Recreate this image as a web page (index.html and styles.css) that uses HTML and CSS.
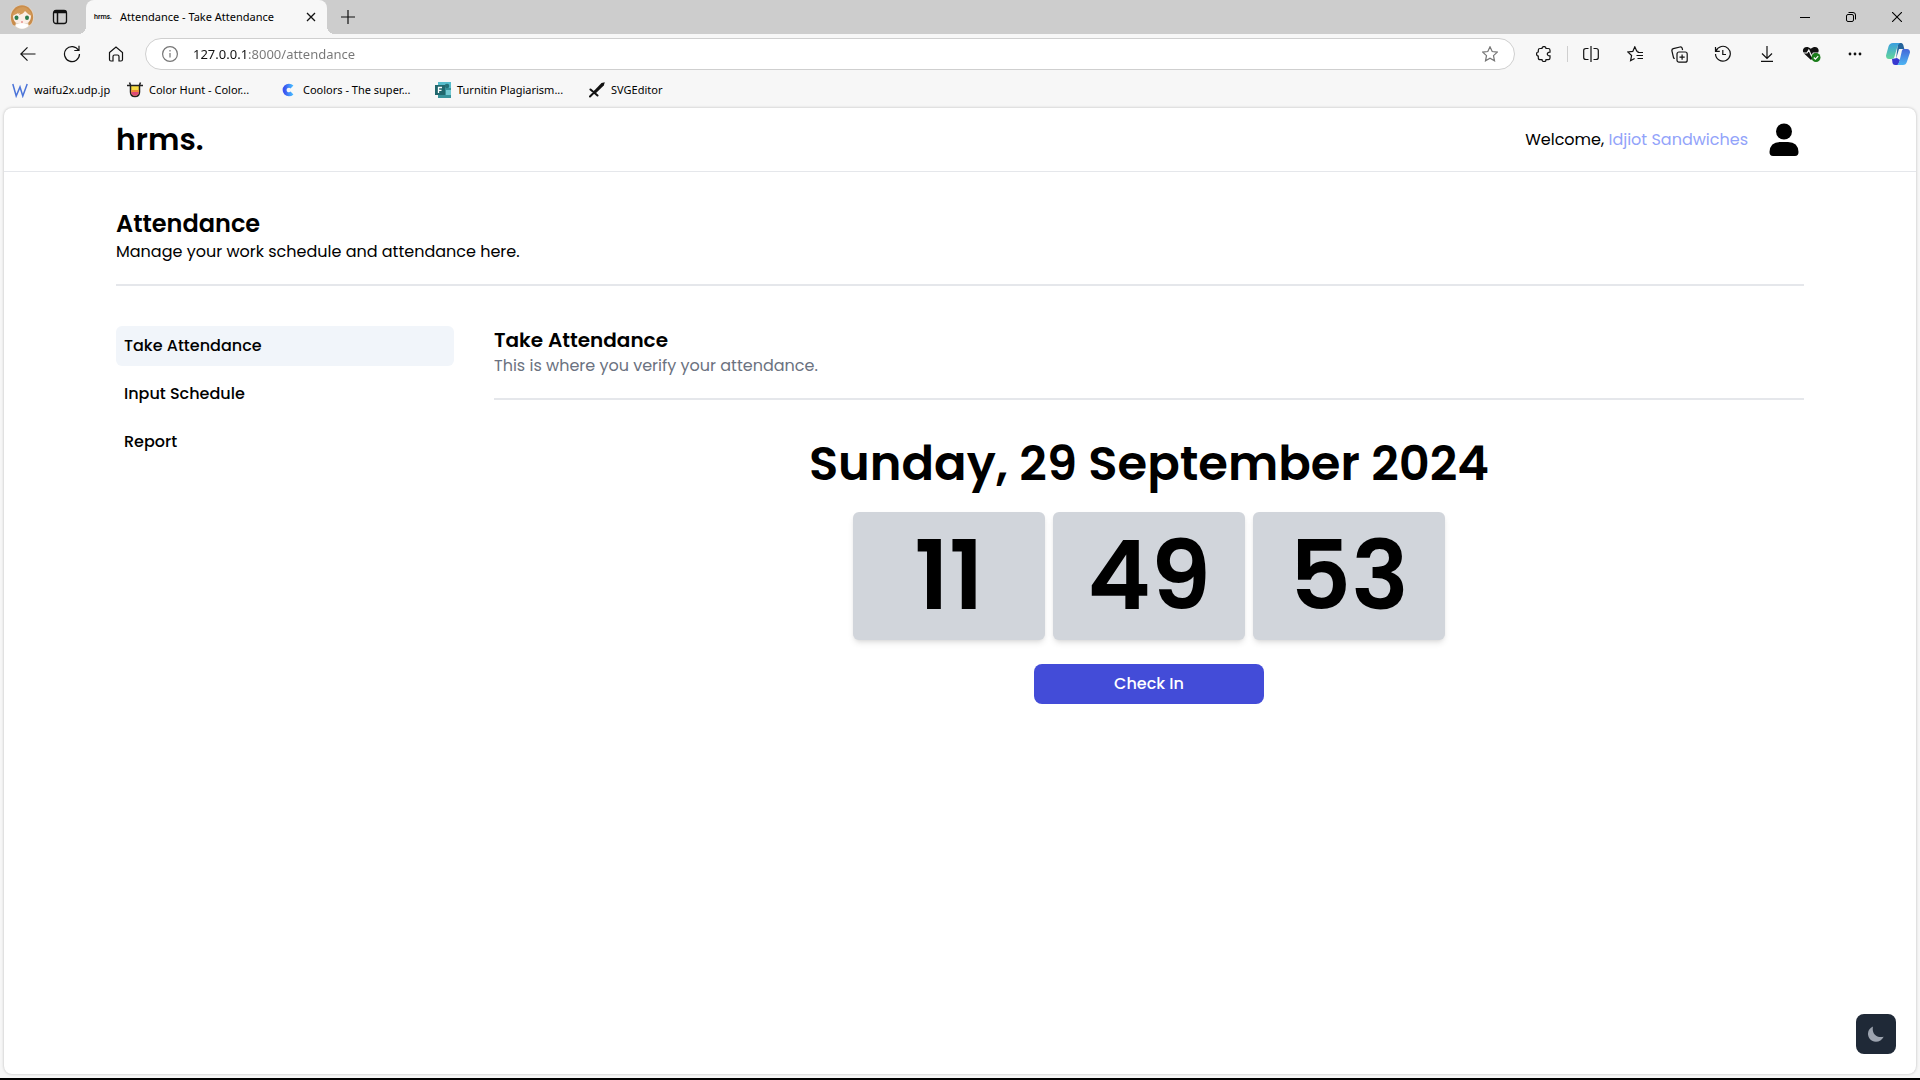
FILE: index.html
```html
<!DOCTYPE html>
<html lang="en">
<head>
<meta charset="utf-8">
<meta name="viewport" content="width=device-width, initial-scale=1">
<title>Attendance - Take Attendance</title>
<link rel="stylesheet" href="styles.css">
</head>
<body>
<div class="tabstrip">
  <button class="profile" aria-label="Profile">
    <svg width="24" height="24" viewBox="0 0 24 24"><circle cx="12" cy="12" r="12" fill="#e3d5c5"/><path d="M3 20C0 15 0 8 4 4 8-1 16-1 20 4c4 4 4 11 1 15l-3 2 1-8-14 0 1 8z" fill="#c98d4c"/><path d="M3 11c1-3 4-4 6-6l-1 4 6-4c4 1 7 3 7 6 0 6-4 8-9 8s-9-2-9-8z" fill="#fbeee6"/><path d="M2 11C4 5 9 2 13 2c4 0 8 4 9 9-3-1-5-3-7-5-1 2-3 3-6 4l1-3c-2 1-5 3-8 4z" fill="#d39a58"/><ellipse cx="6.500" cy="12.800" rx="2" ry="2.200" fill="#2f7d4f"/><ellipse cx="17" cy="12.800" rx="2" ry="2.200" fill="#2f7d4f"/><path d="M5 20c3-2 11-2 14 0-3 5-11 5-14 0z" fill="#fff"/><path d="M11 17h2" stroke="#d66"/></svg>
  </button>
  <button class="tab-actions" aria-label="Tab actions">
    <svg width="16" height="16" viewBox="0 0 16 16" fill="none" stroke="#111"><rect x="1.500" y="1.500" width="13" height="13" rx="2.500" stroke-width="1.300"/><path d="M2 3.500h12M5.500 4v10" stroke-width="1.500"/><path d="M2 2.500h12" stroke-width="2"/></svg>
  </button>
  <div class="tab">
    <span class="favicon">hrms.</span>
    <span class="tab-title">Attendance - Take Attendance</span>
    <button class="tab-close" aria-label="Close tab"><svg width="10" height="10" viewBox="0 0 10 10" stroke="#111" stroke-width="1.300"><path d="M1 1l8 8M9 1l-8 8"/></svg></button>
  </div>
  <button class="new-tab" aria-label="New tab"><svg width="14" height="14" viewBox="0 0 14 14" stroke="#111" stroke-width="1.200"><path d="M7 0v14M0 7h14"/></svg></button>
  <div class="window-controls">
    <button aria-label="Minimize"><svg width="10" height="10" viewBox="0 0 10 10" stroke="#000"><path d="M0 5.500h10"/></svg></button>
    <button aria-label="Restore"><svg width="10" height="10" viewBox="0 0 10 10" fill="none" stroke="#000"><rect x=".5" y="2.500" width="7" height="7" rx="1.500"/><path d="M2.500.5h4.500a2.500 2.500 0 0 1 2.500 2.500v4.500"/></svg></button>
    <button aria-label="Close"><svg width="10" height="10" viewBox="0 0 10 10" stroke="#000" stroke-width="1.100"><path d="M0 0l10 10M10 0L0 10"/></svg></button>
  </div>
</div>

<div class="toolbar">
  <button class="tool" aria-label="Back"><svg width="16" height="16" viewBox="0 0 16 16"><path d="M15.500 8H.8M7.500 1.300L.8 8l6.700 6.700"/></svg></button>
  <button class="tool" aria-label="Refresh"><svg width="18" height="18" viewBox="0 0 18 18"><path d="M15.500 5.300A7.500 7.500 0 1 0 16.500 9M16 .8v4.700h-4.700"/></svg></button>
  <button class="tool" aria-label="Home"><svg width="16" height="16" viewBox="0 0 16 16"><path d="M1.500 6.500L8 1l6.500 5.500v7q0 1.500-1.500 1.500h-2V10.500q0-1.500-1.500-1.500h-3Q5 9 5 10.500V15H3q-1.500 0-1.500-1.500z"/></svg></button>
  <div class="address">
    <svg class="info" width="16" height="16" viewBox="0 0 16 16"><circle cx="8" cy="8" r="7.400"/><path d="M8 7v4.500M8 4v1.500"/></svg>
    <input class="url" type="text" aria-label="Address" value="127.0.0.1:8000/attendance">
    <button class="favorite" aria-label="Add to favorites"><svg width="16" height="16" viewBox="0 0 16 16"><path d="M8 .8l2.200 4.700 5.100.6-3.800 3.500 1 5.200L8 12.200l-4.500 2.600 1-5.200L.7 6.100l5.100-.6z"/></svg></button>
  </div>
  <button class="tool" aria-label="Extensions"><svg width="16" height="16" viewBox="0 0 16 16"><path d="M4 2.500H6c0-2.600 4-2.600 4 0h2.300q1.700 0 1.700 1.700V6.200c-3.600-.3-3.600 4 0 3.600v2.200q0 1.700-1.700 1.700H10c0 2.600-4 2.600-4 0H4q-1.700 0-1.700-1.700V10C0 10 0 6 2.300 6V4.200Q2.300 2.500 4 2.500z"/></svg></button>
  <span class="divider"></span>
  <button class="tool" aria-label="Split screen"><svg width="16" height="16" viewBox="0 0 16 16"><path d="M8 0v16M5.500 2.500H3Q.7 2.500.7 4.500v7q0 2 2.300 2h2.500M10.500 2.500H13q2.300 0 2.300 2v7q0 2-2.300 2h-2.500"/></svg></button>
  <button class="tool" aria-label="Favorites"><svg width="17" height="16" viewBox="0 0 17 16"><path d="M11.500 5.500L9.800 5.200 7.800.8 5.800 5.400.8 6l3.800 3.500-1 5.200 4-2.200M10.500 6.500H16M9.500 9.500H16M10.500 12.500H16"/></svg></button>
  <button class="tool" aria-label="Collections"><svg width="17" height="17" viewBox="0 0 17 17"><rect x="6" y="6" width="10.200" height="10.200" rx="2"/><path d="M11.100 8.500v5.200M8.500 11.100h5.200M3.800 12.500L2.600 12 .9 5Q.6 3.200 2.300 2.700L9 1q1.700-.3 2.200 1.300l.4 1.700"/></svg></button>
  <button class="tool" aria-label="History"><svg width="18" height="18" viewBox="0 0 18 18"><path d="M1.500 2v4.300h4.300M2 6A7.400 7.400 0 1 1 1.500 9M8.800 5v4.500H12"/></svg></button>
  <button class="tool" aria-label="Downloads"><svg width="14" height="16" viewBox="0 0 14 16"><path d="M7 0v12M2 7.500L7 12.400l5-4.900M1 15.400h12"/></svg></button>
  <button class="tool" aria-label="Browser essentials"><svg width="19" height="18" viewBox="0 0 19 18"><path d="M9 15L2 8.500C-1.500 4 4-.5 8.800 3.800c5-4.300 10.200.2 6.800 4.700z" fill="#111" stroke="none"/><path d="M1 8h4l1.800-3 2.700 6 1.800-3H16" stroke="#f7f7f7"/><circle cx="14" cy="12.500" r="4.500" fill="#1b7d1b" stroke="none"/><path d="M11.800 12.500l1.600 1.600 2.800-3" stroke="#fff"/></svg></button>
  <button class="tool" aria-label="Settings and more"><svg width="14" height="4" viewBox="0 0 14 4"><g fill="#111" stroke="none"><circle cx="2" cy="2" r="1.400"/><circle cx="7" cy="2" r="1.400"/><circle cx="12" cy="2" r="1.400"/></g></svg></button>
  <button class="tool copilot" aria-label="Copilot"><svg width="24" height="24" viewBox="0 0 24 24"><defs><linearGradient id="cl" x1="0" y1="0" x2="0" y2="1"><stop offset="0" stop-color="#3b9fe0"/><stop offset="1" stop-color="#63d69a"/></linearGradient><linearGradient id="cr" x1="0" y1="0" x2="0" y2="1"><stop offset="0" stop-color="#4566d8"/><stop offset="1" stop-color="#4db5f2"/></linearGradient></defs><path d="M12 1h3.500q1.300.3 1.800 2l1 4H13l-3 10z" fill="#26649b"/><path d="M7 1h7q-2 1-3 5l-2.500 8.500Q8 17 5 17H3Q0 17 0 13.500L2.500 4.500Q3.500 1 7 1z" fill="url(#cl)"/><path d="M6 17l5-1 3 2-2 5H9q-2 0-2.500-2z" fill="#3838d0"/><path d="M17.500 7H21q3 0 3 3.500l-3 9q-1 3.500-4 3.500h-6q1.800-1 2.500-4l2-8.500Q16 7 17.500 7z" fill="url(#cr)"/></svg></button>
</div>

<nav class="bookmarks" aria-label="Bookmarks">
  <a class="bookmark short" href="#"><svg width="16" height="16" viewBox="0 0 16 16" fill="none" stroke="#4b74d9" stroke-width="1.500"><path d="M.8 2l3.400 12L8 5l2.800 9 4.400-12"/></svg>waifu2x.udp.jp</a>
  <a class="bookmark" href="#"><svg width="16" height="16" viewBox="0 0 16 16"><path d="M3.500 3.500h9V10q0 4.500-4.500 4.500T3.500 10z" fill="#f8dc45" stroke="#222" stroke-width="1.500"/><path d="M4.200 8h7.600v2H4.200z" fill="#f08a3c"/><path d="M4.200 10h7.600q0 3.800-3.800 3.800T4.200 10z" fill="#dd4a76"/><path d="M0 3.500h4M12 3.500h4M2.500.5l1 2.500M13.500.5l-1 2.500" stroke="#222" stroke-width="1.500"/></svg>Color Hunt - Color...</a>
  <a class="bookmark" href="#"><svg width="16" height="16" viewBox="0 0 16 16" fill="none"><defs><linearGradient id="cc"><stop stop-color="#3c54f0"/><stop offset="1" stop-color="#45b4ff"/></linearGradient></defs><path d="M11 5a4.300 4.300 0 1 0 0 6" stroke="url(#cc)" stroke-width="4"/></svg>Coolors - The super...</a>
  <a class="bookmark" href="#"><svg width="16" height="16" viewBox="0 0 16 16"><path d="M3 0h13v16H3z" fill="#37929a"/><path d="M3 0h13v6H3z" fill="#56bccb"/><circle cx="12" cy="4" r="2.300" fill="#257178"/><path d="M11 8h5v5h-5z" fill="#73c8d1"/><path d="M0 3h10v10H0z" fill="#20676d"/><path d="M3.500 11V5.500h3.500M3.500 8.300h3" stroke="#fff" stroke-width="1.300" fill="none"/></svg>Turnitin Plagiarism...</a>
  <a class="bookmark" href="#"><svg width="16" height="16" viewBox="0 0 16 16" fill="#111"><path d="M15.800.2l-1 3.300-8 7.700-2.200-2L12.500 1z"/><path d="M1.500 7.500l7 6M1 14.500l5-5" stroke="#111" stroke-width="2" stroke-linecap="round"/></svg>SVGEditor</a>
</nav>

<div class="viewport">
  <header class="site-header">
    <a class="brand" href="#">hrms.</a>
    <div class="account">
      <span>Welcome, <a class="user-name" href="#">Idjiot Sandwiches</a></span>
      <button class="avatar" aria-label="Account"><svg width="30" height="34" viewBox="0 0 30 34"><circle cx="15" cy="8.500" r="8"/><path d="M11 19h8q10 0 10.500 10 0 4-3.500 4H4q-3.500 0-3.500-4Q1 19 11 19z"/></svg></button>
    </div>
  </header>

  <main class="content">
    <div class="heading">
      <h1>Attendance</h1>
      <p>Manage your work schedule and attendance here.</p>
    </div>
    <div class="columns">
      <nav class="side" aria-label="Attendance">
        <a class="side-link active" href="#">Take Attendance</a>
        <a class="side-link" href="#">Input Schedule</a>
        <a class="side-link" href="#">Report</a>
      </nav>
      <section class="panel">
        <div class="panel-heading">
          <h2>Take Attendance</h2>
          <p>This is where you verify your attendance.</p>
        </div>
        <div class="checkin">
          <div class="date">Sunday, 29 September 2024</div>
          <div class="clock">
            <span class="digits">11</span>
            <span class="digits">49</span>
            <span class="digits">53</span>
          </div>
          <button class="check-button">Check In</button>
        </div>
      </section>
    </div>
  </main>
  <button class="theme-toggle" aria-label="Toggle dark mode"><svg width="16" height="16" viewBox="0 0 16 16" fill="#9ca3af"><path d="M5 .5C-1 3-2 11 4 14.700c4.500 2.500 9.500.3 11.700-4C8.500 12.500 3.500 7.500 5 .5z"/></svg></button>
</div>
</body>
</html>
```
FILE: styles.css
```css
* {
  box-sizing: border-box;
}

body {
  margin: 0;
  min-height: 100vh;
  display: flex;
  flex-direction: column;
  background: #f7f7f7;
  border-bottom: 2px solid #000;
  color: #000;
  font: 11px/16px "Segoe UI", "Noto Sans", sans-serif;
}

button {
  display: flex;
  align-items: center;
  justify-content: center;
  padding: 0;
  border: 0;
  background: none;
  color: inherit;
  font: inherit;
  cursor: pointer;
}

a {
  color: inherit;
  text-decoration: none;
}

h1,
h2,
p {
  margin: 0;
}

svg {
  flex: none;
}

/* Tab strip */
.tabstrip {
  display: flex;
  align-items: center;
  height: 34px;
  background: #cdcdcd;
}

.profile {
  margin-left: 10px;
}

.tab-actions {
  width: 52px;
  height: 34px;
}

.tab {
  position: relative;
  display: flex;
  align-items: center;
  width: 241px;
  height: 34px;
  padding: 0 8px;
  background: #f7f7f7;
  border-radius: 8px 8px 0 0;
}

.tab::before,
.tab::after {
  content: "";
  position: absolute;
  bottom: 0;
  width: 8px;
  height: 8px;
}

.tab::before {
  right: 100%;
  background: radial-gradient(circle at 0 0, #cdcdcd 8px, #f7f7f7 8px);
}

.tab::after {
  left: 100%;
  background: radial-gradient(circle at 100% 0, #cdcdcd 8px, #f7f7f7 8px);
}

.favicon {
  width: 26px;
  font: 600 6px/16px Poppins, sans-serif;
}

.tab-title {
  flex: 1;
  white-space: nowrap;
}

.tab-close {
  width: 16px;
  height: 16px;
}

.new-tab {
  width: 42px;
  height: 34px;
}

.window-controls {
  display: flex;
  margin-left: auto;
}

.window-controls button {
  width: 46px;
  height: 34px;
}

/* Toolbar */
.toolbar {
  display: flex;
  align-items: center;
  height: 40px;
  padding: 0 1px 0 6px;
}

.tool {
  width: 44px;
  height: 32px;
}

.tool svg {
  fill: none;
  stroke: #111;
  stroke-width: 1.2;
}

.tool.copilot {
  width: 42px;
}

.tool.copilot svg {
  stroke: none;
}

.divider {
  width: 1px;
  height: 16px;
  margin: 0 1px;
  background: #cfcfcf;
}

.address {
  flex: 1;
  display: flex;
  align-items: center;
  height: 32px;
  margin: 0 7px;
  padding: 0 16px;
  background: #fff;
  border: 1px solid #cfcfcf;
  border-radius: 16px;
}

.address svg {
  fill: none;
  stroke: #767676;
  stroke-width: 1.2;
}

.url {
  flex: 1;
  height: 24px;
  margin-left: 15px;
  padding: 0;
  border: 0;
  outline: 0;
  background: linear-gradient(to right, #111 53px, #767676 53px);
  background-clip: text;
  -webkit-background-clip: text;
  color: transparent;
  font: 13px/24px "Segoe UI", "Noto Sans", sans-serif;
}

/* Bookmarks */
.bookmarks {
  display: flex;
  align-items: center;
  height: 32px;
  padding-left: 12px;
}

.bookmark {
  display: flex;
  align-items: center;
  gap: 6px;
  width: 154px;
  white-space: nowrap;
}

.bookmark.short {
  width: 115px;
}

/* Web page */
.viewport {
  position: relative;
  flex: 1;
  margin: 2px 4px 4px;
  background: #fff;
  border-radius: 8px;
  box-shadow: 0 0 3px rgba(0, 0, 0, 0.25);
  font: 16px/24px Poppins, sans-serif;
}

.site-header {
  display: flex;
  align-items: center;
  justify-content: space-between;
  height: 64px;
  padding: 0 112px;
  border-bottom: 1px solid #e5e7eb;
}

.brand {
  font-size: 30px;
  font-weight: 600;
  line-height: 36px;
}

.account {
  display: flex;
  align-items: center;
  gap: 16px;
}

.user-name {
  color: #92a3fa;
}

.avatar {
  width: 40px;
  height: 40px;
}

.content {
  padding: 36px 112px;
}

.heading {
  padding-bottom: 20px;
  border-bottom: 2px solid #e5e7eb;
}

.heading h1 {
  font-size: 24px;
  font-weight: 600;
  line-height: 32px;
}

.columns {
  display: grid;
  grid-template-columns: 338px 1fr;
  gap: 40px;
  padding-top: 40px;
}

.side {
  display: flex;
  flex-direction: column;
  gap: 8px;
}

.side-link {
  padding: 8px;
  border-radius: 6px;
  font-weight: 500;
}

.side-link.active {
  background: #f1f5fa;
}

.panel-heading {
  padding-bottom: 20px;
  border-bottom: 2px solid #e5e7eb;
}

.panel-heading h2 {
  font-size: 20px;
  font-weight: 600;
  line-height: 28px;
}

.panel-heading p {
  color: #6b7280;
}

.checkin {
  display: flex;
  flex-direction: column;
  align-items: center;
  padding-top: 40px;
}

.date {
  font-size: 48px;
  font-weight: 600;
  line-height: 48px;
}

.clock {
  display: flex;
  gap: 8px;
  margin: 24px 0;
}

.digits {
  width: 192px;
  height: 128px;
  background: #d1d5db;
  border-radius: 6px;
  box-shadow: 0 4px 6px -1px rgba(0, 0, 0, 0.1), 0 2px 4px -2px rgba(0, 0, 0, 0.1);
  font-size: 96px;
  font-weight: 600;
  line-height: 128px;
  text-align: center;
}

.check-button {
  width: 230px;
  height: 40px;
  background: #434cd8;
  border-radius: 8px;
  color: #fff;
  font-weight: 500;
}

.theme-toggle {
  position: absolute;
  right: 20px;
  bottom: 20px;
  width: 40px;
  height: 40px;
  background: #1f2937;
  border-radius: 8px;
}
```
